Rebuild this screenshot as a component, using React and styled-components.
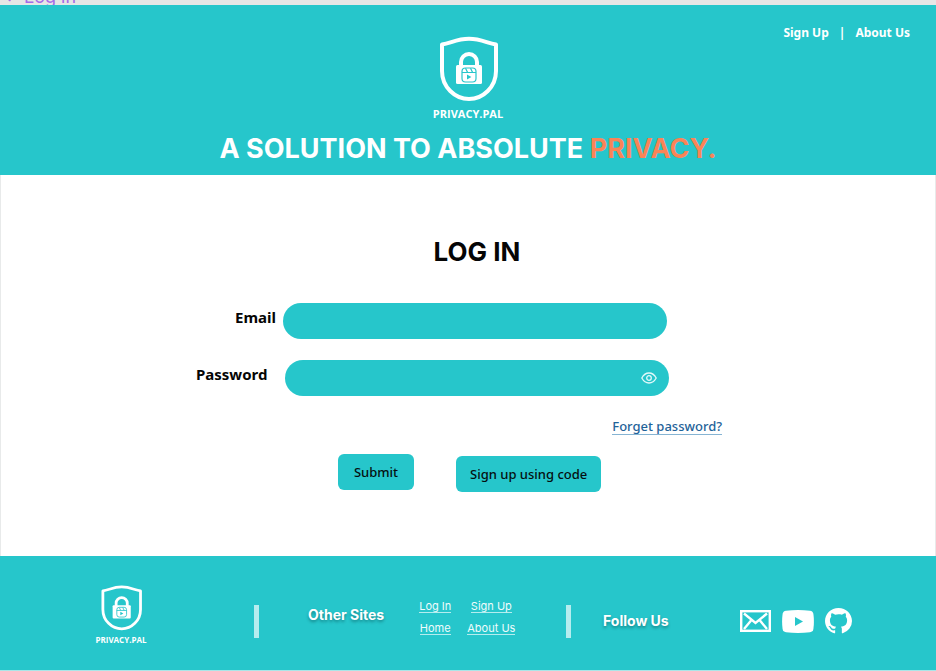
import React from "react";
import styled, { createGlobalStyle } from "styled-components";

const teal = "#26c6cb";
const humanist = '"Noto Sans", "Open Sans", sans-serif';
const grotesk = 'Inter, "Liberation Sans", sans-serif';

const GlobalStyle = createGlobalStyle`
  *, *::before, *::after { box-sizing: border-box; }
  body { margin: 0; background: #fff; color: #050505; font-family: ${grotesk}; }
`;

const Page = styled.div`
  display: flex;
  flex-direction: column;
  min-height: 100vh;
`;

const FrameStrip = styled.div`
  display: flex;
  align-items: flex-end;
  gap: 12px;
  height: 5px;
  padding-left: 8px;
  overflow: hidden;
  background: #e6e6e6;
  color: #a56be8;
  font-size: 18px;
  line-height: 16px;
`;

const StripMark = styled.svg`
  flex: none;
  width: 4px;
  height: 5px;
`;

const Header = styled.header`
  display: grid;
  grid-template-columns: 1fr auto 1fr;
  height: 170px;
  padding: 0 26px;
  background: ${teal};
  color: #fff;
`;

const BrandBox = styled.div`
  display: flex;
  flex-direction: column;
  align-items: center;
  grid-column: 2;
  padding-top: ${(p) => (p.$small ? 0 : 31)}px;
  font: 700 ${(p) => (p.$small ? "8px/12px" : "11px/16px")} "Open Sans", sans-serif;
  color: #fff;
`;

const Shield = styled.svg`
  width: ${(p) => (p.$small ? 42 : 60)}px;
  height: ${(p) => (p.$small ? 46 : 66)}px;
  margin-bottom: ${(p) => (p.$small ? 3 : 4)}px;
`;

const TopNav = styled.nav`
  display: flex;
  justify-content: flex-end;
  gap: 10px;
  padding-top: 19px;
  font: 700 12px/18px ${humanist};
`;

const TopLink = styled.a`
  color: #fff;
  text-decoration: none;
`;

const Tagline = styled.p`
  grid-column: 1 / -1;
  margin: 0;
  font-size: 27px;
  font-weight: 700;
  line-height: 32px;
  text-align: center;
`;

const Accent = styled.span`
  color: #fa8457;
`;

const Main = styled.main`
  flex: 1;
  padding: 61px 16px 62px;
  border: solid #e8eaea;
  border-width: 0 1px;
`;

const Title = styled.h1`
  margin: 0 0 35px;
  padding-left: 18px;
  font-size: 26px;
  line-height: 32px;
  text-align: center;
`;

const Form = styled.form`
  max-width: 544px;
  margin: 0 auto;
`;

const Field = styled.div`
  display: flex;
  align-items: flex-start;
  gap: ${(p) => p.$gap}px;
  margin-bottom: 21px;
`;

const Label = styled.label`
  flex: none;
  width: 80px;
  text-align: ${(p) => p.$align};
  font: 700 15px/28px ${humanist};
`;

const InputShell = styled.div`
  display: flex;
  align-items: center;
  flex: 0 1 384px;
  height: 36px;
  padding: 0 12px 0 18px;
  border-radius: 18px;
  background: ${teal};
`;

const TextInput = styled.input`
  flex: 1;
  min-width: 0;
  height: 100%;
  padding: 0;
  border: 0;
  outline: 0;
  background: transparent;
  font: 500 14px ${humanist};
`;

const EyeButton = styled.button`
  display: flex;
  padding: 0;
  border: 0;
  background: none;
  cursor: pointer;
`;

const ForgetRow = styled.div`
  display: flex;
  justify-content: flex-end;
  padding: 2px 18px 0 0;
`;

const ForgetLink = styled.a`
  border-bottom: 1px solid #86b4d3;
  color: #1f6399;
  font: 500 13px/15px ${humanist};
  text-decoration: none;
`;

const Actions = styled.div`
  display: flex;
  align-items: flex-end;
  gap: 42px;
  padding: 19px 0 0 142px;
`;

const ActionButton = styled.button`
  height: 36px;
  margin-bottom: ${(p) => (p.$raised ? 2 : 0)}px;
  padding: 0 14px;
  border: 0;
  border-radius: 6px;
  background: ${teal};
  color: #050f10;
  font: 500 13px/20px ${humanist};
  min-width: ${(p) => p.$min}px;
  white-space: nowrap;
  cursor: pointer;
`;

const Footer = styled.footer`
  display: grid;
  grid-template-columns: 254fr 312fr 370fr;
  height: 115px;
  border-bottom: 1px solid #a9e6e8;
  background: ${teal};
  color: #fff;
`;

const FooterBrand = styled.div`
  display: flex;
  justify-content: center;
  padding: 29px 12px 0 0;
`;

const FooterGroup = styled.section`
  display: flex;
  align-items: center;
  padding-top: 16px;
`;

const Divider = styled.span`
  flex: none;
  width: 5px;
  height: 33px;
  background: #b5edef;
`;

const FooterHeading = styled.h2`
  margin: 0 0 ${(p) => (p.$lifted ? 12 : 0)}px ${(p) => (p.$lifted ? 49 : 32)}px;
  font-size: 14px;
  font-weight: 700;
  line-height: 20px;
  white-space: nowrap;
  text-shadow: 0 2px 3px rgba(0, 60, 65, 0.45);
`;

const SiteLinks = styled.nav`
  display: grid;
  grid-template-columns: auto auto;
  justify-items: center;
  gap: 9px 16px;
  margin: 0 0 7px 35px;
`;

const SiteLink = styled.a`
  border-bottom: 1px solid #b5edef;
  color: #effcfc;
  font-size: 11px;
  line-height: 12px;
  text-decoration: none;
  white-space: nowrap;
`;

const Socials = styled.div`
  display: flex;
  align-items: center;
  gap: 11px;
  margin-left: 71px;
`;

const SocialLink = styled.a`
  display: flex;
  color: #fff;
`;

function Brand({ small }) {
  return (
    <BrandBox $small={small}>
      <Shield $small={small} viewBox="0 0 60 66" fill="none" aria-hidden="true">
        <path
          d="M4 8.500C13 7 19 2.800 31 2.800S49 7 58 8.500V35C58 51 45 63 31 63S4 51 4 35Z"
          stroke="#fff"
          strokeWidth="4"
          strokeLinejoin="round"
        />
        <path d="M23 31v-5a8 8 0 0 1 16 0v5" stroke="#fff" strokeWidth="4" />
        <rect x="18" y="29" width="26" height="19" rx="1.500" fill="#fff" />
        <g stroke={teal} strokeWidth="1.200">
          <rect x="24" y="32" width="14" height="14" rx="3.500" />
          <path d="M24 36.500h14M27.500 32.300l2 4M32.500 32.300l2 4" />
        </g>
        <path d="M29 38.500v5l4.400-2.500z" fill={teal} />
      </Shield>
      PRIVACY.PAL
    </BrandBox>
  );
}

export default function App() {
  return (
    <Page>
      <GlobalStyle />
      <FrameStrip aria-hidden="true">
        <StripMark viewBox="0 0 4 5">
          <path d="M0 0h3L2 1.400z" fill="#a56be8" />
        </StripMark>
        Log in
      </FrameStrip>
      <Header>
        <Brand />
        <TopNav>
          <TopLink href="#signup">Sign Up</TopLink>
          <span>|</span>
          <TopLink href="#about">About Us</TopLink>
        </TopNav>
        <Tagline>
          A SOLUTION TO ABSOLUTE <Accent>PRIVACY.</Accent>
        </Tagline>
      </Header>
      <Main>
        <Title>LOG IN</Title>
        <Form onSubmit={(e) => e.preventDefault()}>
          <Field $gap={7}>
            <Label htmlFor="email" $align="right">Email</Label>
            <InputShell>
              <TextInput id="email" type="email" />
            </InputShell>
          </Field>
          <Field $gap={9}>
            <Label htmlFor="password" $align="left">Password</Label>
            <InputShell>
              <TextInput id="password" type="password" />
              <EyeButton type="button" aria-label="Show password">
                <svg width="16" height="14" viewBox="0 0 16 14" fill="none" stroke="#e2f9fa" strokeWidth="1.300">
                  <path d="M.8 7C2.600 3.700 5 2 8 2s5.400 1.700 7.200 5c-1.800 3.300-4.200 5-7.200 5S2.600 10.300.8 7z" />
                  <circle cx="8" cy="7" r="2.300" />
                </svg>
              </EyeButton>
            </InputShell>
          </Field>
          <ForgetRow>
            <ForgetLink href="#forget">Forget password?</ForgetLink>
          </ForgetRow>
          <Actions>
            <ActionButton type="submit" $raised $min={76}>Submit</ActionButton>
            <ActionButton type="button" $min={145}>Sign up using code</ActionButton>
          </Actions>
        </Form>
      </Main>
      <Footer>
        <FooterBrand>
          <Brand small />
        </FooterBrand>
        <FooterGroup>
          <Divider />
          <FooterHeading $lifted>Other Sites</FooterHeading>
          <SiteLinks>
            <SiteLink href="#login">Log In</SiteLink>
            <SiteLink href="#signup">Sign Up</SiteLink>
            <SiteLink href="#home">Home</SiteLink>
            <SiteLink href="#about">About Us</SiteLink>
          </SiteLinks>
        </FooterGroup>
        <FooterGroup>
          <Divider />
          <FooterHeading>Follow Us</FooterHeading>
          <Socials>
            <SocialLink href="#mail" aria-label="Email">
              <svg width="31" height="22" viewBox="0 0 31 22" fill="none" stroke="#fff" strokeWidth="2.400">
                <rect x="1.200" y="1.200" width="28.600" height="19.600" />
                <path d="M4 3.500l11.500 9.500L27 3.500M4 19l7.500-9M27 19l-7.500-9" />
              </svg>
            </SocialLink>
            <SocialLink href="#youtube" aria-label="YouTube">
              <svg width="32" height="23" viewBox="0 0 32 23">
                <path
                  d="M4 .8Q16-.6 28 .8 31 1.200 31.400 4 32.400 11.500 31.400 19 31 21.800 28 22.200 16 23.600 4 22.200 1 21.800.6 19-.4 11.500.6 4 1 1.200 4 .8Z"
                  fill="#fff"
                />
                <path d="M13 7v9l8-4.500z" fill={teal} />
              </svg>
            </SocialLink>
            <SocialLink href="#github" aria-label="GitHub">
              <svg width="27" height="26" viewBox="0 0 16 16" preserveAspectRatio="none" fill="currentColor">
                <path d="M8 0C3.580 0 0 3.580 0 8c0 3.540 2.290 6.530 5.470 7.590.4.070.55-.17.55-.38 0-.19-.01-.82-.01-1.490-2.010.37-2.530-.49-2.690-.94-.09-.23-.48-.94-.82-1.130-.28-.15-.68-.52-.01-.53.63-.01 1.080.58 1.230.82.72 1.210 1.870.87 2.330.66.070-.52.28-.87.51-1.070-1.780-.2-3.640-.89-3.640-3.950 0-.87.31-1.590.82-2.150-.08-.2-.36-1.020.08-2.120 0 0 .67-.21 2.200.82A7.600 7.600 0 0 1 8 3.860c.68 0 1.360.09 2 .27 1.530-1.040 2.200-.82 2.200-.82.44 1.100.16 1.920.08 2.120.51.56.82 1.270.82 2.150 0 3.070-1.870 3.750-3.650 3.950.29.25.54.73.54 1.480 0 1.070-.01 1.930-.01 2.200 0 .21.15.46.55.38A8 8 0 0 0 16 8c0-4.420-3.580-8-8-8z" />
              </svg>
            </SocialLink>
          </Socials>
        </FooterGroup>
      </Footer>
    </Page>
  );
}
